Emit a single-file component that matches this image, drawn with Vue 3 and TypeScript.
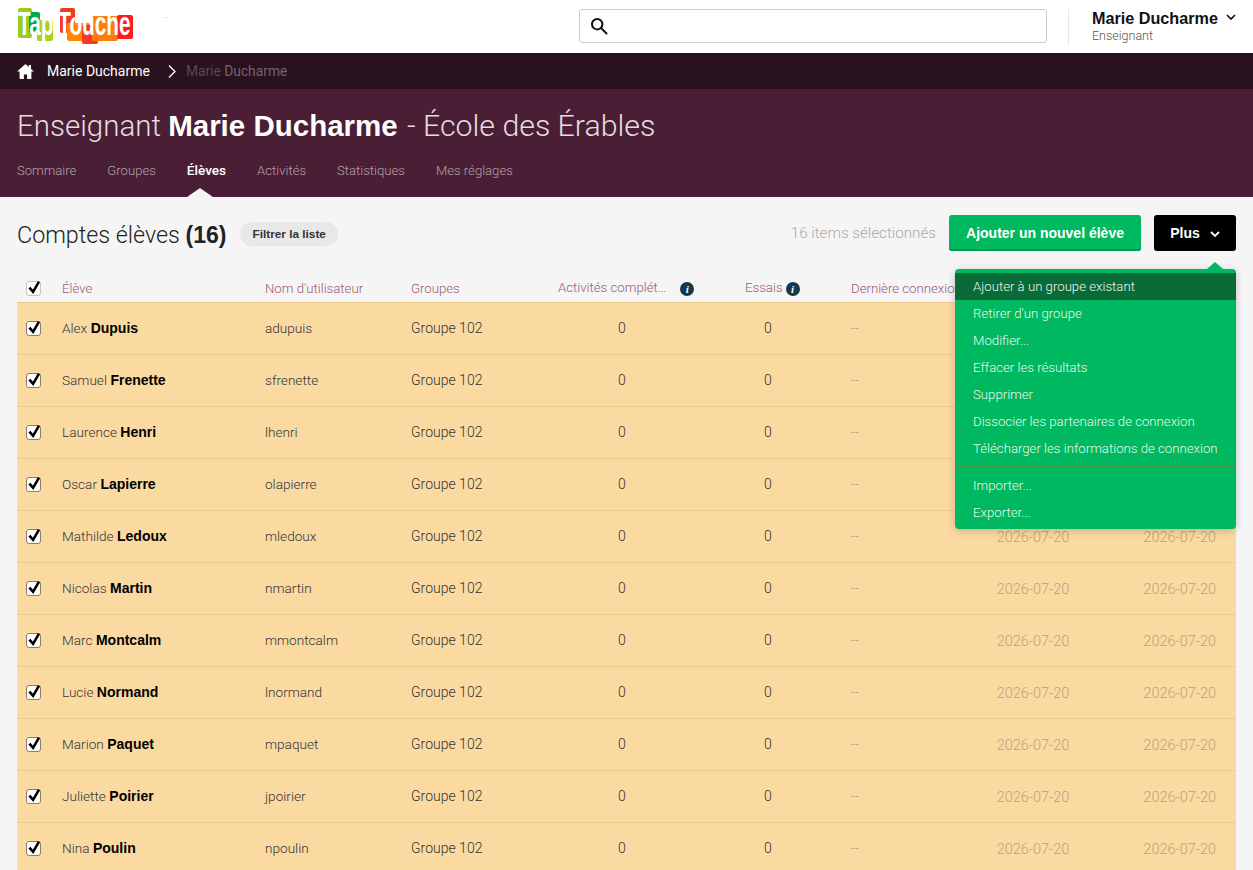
<script setup lang="ts">
interface IStudent {
  first: string
  last: string
  user: string
}

const students: IStudent[] = [
  { first: 'Alex', last: 'Dupuis', user: 'adupuis' },
  { first: 'Samuel', last: 'Frenette', user: 'sfrenette' },
  { first: 'Laurence', last: 'Henri', user: 'lhenri' },
  { first: 'Oscar', last: 'Lapierre', user: 'olapierre' },
  { first: 'Mathilde', last: 'Ledoux', user: 'mledoux' },
  { first: 'Nicolas', last: 'Martin', user: 'nmartin' },
  { first: 'Marc', last: 'Montcalm', user: 'mmontcalm' },
  { first: 'Lucie', last: 'Normand', user: 'lnormand' },
  { first: 'Marion', last: 'Paquet', user: 'mpaquet' },
  { first: 'Juliette', last: 'Poirier', user: 'jpoirier' },
  { first: 'Nina', last: 'Poulin', user: 'npoulin' },
]

const tabs = ['Sommaire', 'Groupes', 'Élèves', 'Activités', 'Statistiques', 'Mes réglages']
const menuTop = ['Ajouter à un groupe existant', "Retirer d'un groupe", 'Modifier...', 'Effacer les résultats', 'Supprimer', 'Dissocier les partenaires de connexion', 'Télécharger les informations de connexion']
const menuBottom = ['Importer...', 'Exporter...']
</script>

<template>
  <div class="page">
    <header class="top">
      <div class="logo">
        <svg class="logo-blocks" width="118" height="53" viewBox="0 0 118 53">
          <rect x="1" y="8" width="14" height="30" rx="2" fill="#9ccb1e" />
          <rect x="12" y="12" width="11" height="21" rx="2" fill="#00a84f" />
          <rect x="20" y="20" width="16" height="21" rx="2" fill="#a8d021" />
          <rect x="43" y="8" width="15" height="25" rx="2" fill="#ee3a23" />
          <rect x="50" y="23" width="23" height="18" rx="2" fill="#ff8a00" />
          <rect x="65" y="25" width="16" height="19" rx="2" fill="#f5362a" />
          <rect x="75" y="16" width="26" height="25" rx="2" fill="#ff7d0c" />
          <rect x="100" y="15" width="16" height="24" rx="2" fill="#ff1c1c" />
        </svg>
        <span class="logo-text">Tap'Touche</span>
        <span class="logo-dot"></span>
      </div>
      <div class="search">
        <svg width="18" height="18" viewBox="0 0 18 18" fill="none" stroke="#111" stroke-width="2"><circle cx="7.2" cy="7.2" r="5.2" /><path d="M11 11l5.5 5.5" stroke-linecap="round" /></svg>
      </div>
      <div class="user">
        <div class="user-name">Marie Ducharme
          <svg width="10" height="7" viewBox="0 0 10 7" fill="none" stroke="#111" stroke-width="1.6"><path d="M1 1l4 4 4-4" /></svg>
        </div>
        <div class="user-role">Enseignant</div>
      </div>
    </header>

    <nav class="crumbs">
      <svg width="17" height="15" viewBox="0 0 17 15" fill="#fff"><path d="M8.5 0L0 7.6h2.6V15h4.3v-4.6h3.2V15h4.3V7.6H17l-3-2.7V1h-2.2v1.9z" /></svg>
      <span class="crumb-a">Marie Ducharme</span>
      <svg width="10" height="15" viewBox="0 0 10 15" fill="none" stroke="#fff" stroke-width="1.3"><path d="M2 1.5l6 6-6 6" /></svg>
      <span class="crumb-b"><span class="crumb-dim">Marie</span> Ducharme</span>
    </nav>

    <section class="band">
      <h1>Enseignant <b>Marie Ducharme</b> <span class="school">- École des Érables</span></h1>
      <ul class="tabs">
        <li v-for="t in tabs" :key="t" :class="{ on: t === 'Élèves' }">{{ t }}</li>
      </ul>
    </section>

    <main class="content">
      <div class="toolbar">
        <h2>Comptes élèves <b>(16)</b></h2>
        <button class="filter">Filtrer la liste</button>
        <span class="selected">16 items sélectionnés</span>
        <button class="add">Ajouter un nouvel élève</button>
        <button class="more">Plus
          <svg width="10" height="7" viewBox="0 0 10 7" fill="none" stroke="#fff" stroke-width="1.8"><path d="M1 1l4 4 4-4" /></svg>
        </button>
      </div>

      <div class="menu">
        <div class="menu-arrow"></div>
        <div v-for="(m, i) in menuTop" :key="m" class="menu-item" :class="{ hover: i === 0 }">{{ m }}</div>
        <div class="menu-sep"></div>
        <div v-for="m in menuBottom" :key="m" class="menu-item">{{ m }}</div>
      </div>

      <div class="row head">
        <div class="c-check"><span class="box"><svg width="14" height="14" viewBox="0 0 14 14" fill="none" stroke="#000" stroke-width="2.6"><path d="M2.4 6.6l3.7 4.2L12 0.6" /></svg></span></div>
        <div>Élève</div>
        <div>Nom d'utilisateur</div>
        <div>Groupes</div>
        <div class="h-act">Activités complét…<span class="info">i</span></div>
        <div class="h-ess">Essais<span class="info">i</span></div>
        <div class="h-last">Dernière connexion</div>
      </div>

      <div v-for="s in students" :key="s.user" class="row body">
        <div class="c-check"><span class="box"><svg width="14" height="14" viewBox="0 0 14 14" fill="none" stroke="#000" stroke-width="2.6"><path d="M2.4 6.6l3.7 4.2L12 0.6" /></svg></span></div>
        <div><span class="first">{{ s.first }}</span> <b>{{ s.last }}</b></div>
        <div class="login">{{ s.user }}</div>
        <div>Groupe 102</div>
        <div class="num">0</div>
        <div class="num">0</div>
        <div class="dim dash">--</div>
        <div class="dim date num">2026-07-20</div>
        <div class="dim date end">2026-07-20</div>
      </div>
    </main>
  </div>
</template>

<style>
html, body {
  margin: 0;
  overflow: hidden;
}
</style>

<style scoped>
.page {
  height: 870px;
  overflow: hidden;
  background: #f5f5f5;
  font-family: Roboto, "Liberation Sans", sans-serif;
  font-weight: 300;
  font-size: 14px;
  color: #222;
}
.top {
  height: 53px;
  background: #fff;
  display: flex;
  align-items: center;
  padding-left: 17px;
  box-sizing: border-box;
}
.logo {
  position: relative;
  width: 562px;
  height: 53px;
}
.logo-blocks {
  position: absolute;
  left: 0;
  top: 0;
}
.logo-text {
  position: absolute;
  left: 1px;
  top: 3px;
  font: 700 34px/40px "Liberation Sans", sans-serif;
  color: #fff;
  white-space: nowrap;
  transform-origin: left center;
  transform: scaleX(.61);
}
.logo-dot {
  position: absolute;
  left: 149px;
  top: 17px;
  width: 1px;
  height: 1px;
  background: #aaa;
}
.search {
  width: 468px;
  height: 34px;
  margin-top: -1px;
  border: 1px solid #ccc;
  border-radius: 3px;
  display: flex;
  align-items: center;
  padding-left: 10px;
  box-sizing: border-box;
}
.user {
  margin-left: 21px;
  border-left: 1px solid #e8e8e8;
  height: 36px;
  padding-left: 23px;
}
.user-name {
  font: 700 16.2px/18px "Liberation Sans", sans-serif;
  color: #111;
  display: flex;
  align-items: center;
  gap: 8px;
  white-space: nowrap;
}
.user-role {
  font-size: 12.5px;
  line-height: 18px;
  color: #555;
}
.crumbs {
  height: 36px;
  background: #28121d;
  display: flex;
  align-items: center;
  padding-left: 17px;
  font-size: 14px;
}
.crumb-a {
  color: #fff;
  font-weight: 400;
  margin: 0 17px 0 13px;
}
.crumb-b {
  color: #7a6070;
  font-weight: 400;
  font-size: 13.8px;
  margin-left: 9px;
}
.crumb-dim {
  color: #5e4654;
}
.band {
  height: 108px;
  background: #4a1f35;
  padding: 0 17px;
  box-sizing: border-box;
  color: #e5dde1;
}
h1 {
  margin: 0;
  padding-top: 19px;
  font-size: 29.5px;
  line-height: 36px;
  font-weight: 300;
  white-space: nowrap;
}
h1 b {
  font: 700 29.5px/36px "Liberation Sans", sans-serif;
  color: #fff;
}
.school {
  margin-left: 2px;
  font-size: 30.3px;
}
.tabs {
  display: flex;
  gap: 31px;
  margin: 0;
  padding: 18px 0 0;
  list-style: none;
  color: #b3a0aa;
  font-size: 13.1px;
  line-height: 17px;
}
.tabs .on {
  position: relative;
  color: #fff;
  font-weight: 500;
  font-size: 13.6px;
}
.tabs .on::after {
  content: "";
  position: absolute;
  left: 0;
  bottom: -18px;
  border: 13px solid transparent;
  border-top: 0;
  border-bottom: 9px solid #f5f5f5;
}
.content {
  position: relative;
  padding: 0 17px;
}
.toolbar {
  height: 72px;
  display: flex;
  align-items: center;
}
h2 {
  margin: 3px 0 0;
  font-size: 23.3px;
  font-weight: 300;
  color: #222;
}
h2 b {
  font: 700 23px "Liberation Sans", sans-serif;
}
.filter {
  margin: 2px 0 0 14px;
  height: 24px;
  padding: 0 12px;
  border: 0;
  border-radius: 12px;
  background: #e8e8e8;
  color: #333;
  font: 700 11.8px "Liberation Sans", sans-serif;
}
.selected {
  margin-left: auto;
  color: #aaa;
  font-size: 15.2px;
}
.add, .more {
  height: 36px;
  border: 0;
  border-radius: 3px;
  color: #fff;
  font: 700 14px "Liberation Sans", sans-serif;
}
.add {
  margin-left: 13px;
  width: 192px;
  background: #00b85f;
  box-shadow: inset 0 -2px 0 #009a50;
}
.more {
  margin-left: 13px;
  width: 82px;
  background: #000;
}
.more svg {
  margin-left: 6px;
}
.menu {
  position: absolute;
  z-index: 2;
  left: 955px;
  top: 72px;
  width: 281px;
  height: 260px;
  padding-top: 4px;
  box-sizing: border-box;
  background: #00b85f;
  border-radius: 4px;
  color: #e6f8ee;
  font-size: 13.2px;
  box-shadow: 0 2px 8px rgba(0, 0, 0, .2);
}
.menu-arrow {
  position: absolute;
  right: 13px;
  top: -7px;
  border: 8px solid transparent;
  border-top: 0;
  border-bottom: 7px solid #00b85f;
}
.menu-item {
  height: 27px;
  line-height: 28px;
  padding-left: 18px;
  white-space: nowrap;
}
.hover {
  background: #0b6b38;
}
.menu-sep {
  height: 1px;
  margin: 4px 0 5px;
  background: #3f9a4f;
}
.row {
  display: grid;
  grid-template-columns: 45px 203px 146px 138px 146px 146px 119px 146px 130px;
  align-items: center;
}
.head {
  height: 33px;
  padding-top: 5px;
  box-sizing: border-box;
  color: #9b5a7c;
  font-size: 13.2px;
}
.body {
  height: 52px;
  padding-bottom: 1px;
  box-sizing: border-box;
  background: #fbdaa2;
  border-top: 1px solid #eccb8f;
  color: #333;
}
.body b {
  font: 700 14px "Liberation Sans", sans-serif;
  color: #000;
}
.first, .login {
  font-size: 13.6px;
}
.c-check {
  padding-left: 9px;
  display: flex;
}
.box {
  width: 15px;
  height: 15px;
  box-sizing: border-box;
  border: 1px solid #c4c4c4;
  border-radius: 3px;
  background: #fff;
  display: flex;
  align-items: center;
  justify-content: center;
}
.body .box {
  border-color: #8f8064;
}
.box svg {
  flex: none;
  overflow: visible;
}
.h-act {
  padding-left: 9px;
  white-space: nowrap;
}
.h-act .info {
  margin-left: 14px;
}
.h-ess {
  padding-left: 50px;
  white-space: nowrap;
}
.h-ess .info {
  margin-left: 3px;
}
.h-last {
  white-space: nowrap;
  padding-left: 10px;
}
.info {
  display: inline-block;
  width: 14px;
  height: 14px;
  border-radius: 50%;
  background: #16384f;
  color: #fff;
  font: italic 700 11px/14px "Liberation Serif", serif;
  text-align: center;
  vertical-align: -1px;
}
.num {
  text-align: center;
}
.dash {
  padding-left: 10px;
}
.dim {
  color: #b9a27d;
}
.date {
  font-size: 14.5px;
  padding-top: 2px;
}
.end {
  text-align: right;
  padding-right: 20px;
}
</style>
